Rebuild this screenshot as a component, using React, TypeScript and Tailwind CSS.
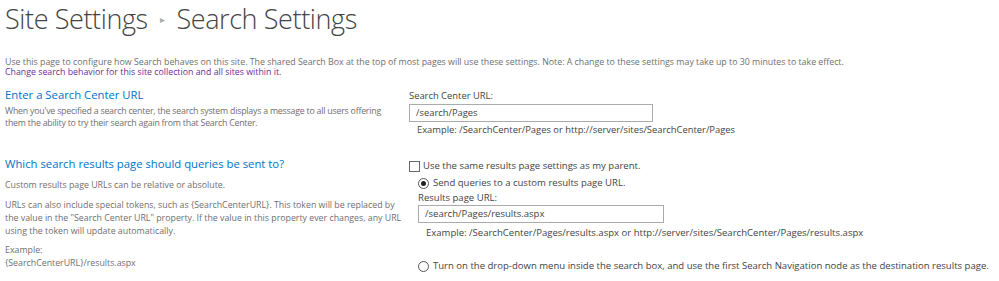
import React from "react";

const font = { fontFamily: '"Open Sans", "Liberation Sans", sans-serif' };

export default function App() {
  return (
    <div className="w-[999px] h-[281px] bg-white overflow-hidden text-[#444]" style={font}>
      <div className="pl-[5px]">
        <h1 className="flex items-center h-[36px] mt-[1px] text-[27px] font-light leading-[36px] text-[#444] tracking-[-0.4px]">
          <span>Site Settings</span>
          <span className="mx-[12px] text-[10px] text-[#aaa]">▸</span>
          <span>Search Settings</span>
        </h1>
        <div className="mt-[20px] text-[8.8px] leading-[10px] text-[#6f6f6f]">
          Use this page to configure how Search behaves on this site. The shared Search Box at the top of most pages will use these settings. Note: A change to these settings may take up to 30 minutes to take effect.
        </div>
        <div className="text-[8.8px] leading-[10px] text-[#6e2c9a]">
          Change search behavior for this site collection and all sites within it.
        </div>

        <div className="flex mt-[10px]">
          <div className="w-[404px] shrink-0">
            <h2 className="text-[11.3px] leading-[16px] text-[#0072c6]">Enter a Search Center URL</h2>
            <p className="mt-[2px] w-[397px] text-[8.8px] leading-[12px] tracking-[-0.22px] text-[#6f6f6f]">
              When you've specified a search center, the search system displays a message to all users offering them the ability to try their search again from that Search Center.
            </p>
          </div>
          <div className="text-[9.4px] leading-[12px] text-[#444]">
            <div className="mt-[3px]">Search Center URL:</div>
            <div className="mt-[2px] w-[244px] h-[18px] border border-[#ababab] px-[6px] flex items-center">/search/Pages</div>
            <div className="mt-[2px] pl-[8px]">Example: /SearchCenter/Pages or http://server/sites/SearchCenter/Pages</div>
          </div>
        </div>

        <div className="flex mt-[20px]">
          <div className="w-[404px] shrink-0">
            <h2 className="text-[11.3px] leading-[16px] text-[#0072c6]">Which search results page should queries be sent to?</h2>
            <p className="mt-[7px] text-[8.8px] leading-[13px] text-[#6f6f6f]">Custom results page URLs can be relative or absolute.</p>
            <p className="mt-[7px] w-[397px] text-[8.8px] leading-[13px] text-[#6f6f6f]">
              URLs can also include special tokens, such as {"{SearchCenterURL}"}. This token will be replaced by the value in the "Search Center URL" property. If the value in this property ever changes, any URL using the token will update automatically.
            </p>
            <p className="mt-[6px] text-[8.8px] leading-[13px] text-[#6f6f6f]">
              Example:
              <br />
              {"{SearchCenterURL}"}/results.aspx
            </p>
          </div>
          <div className="text-[9.55px] leading-[12px] text-[#444]">
            <div className="flex items-center mt-[4px]">
              <span className="w-[11px] h-[11px] border border-[#666] bg-white mr-[3px]" />
              <span>Use the same results page settings as my parent.</span>
            </div>
            <div className="pl-[9px] mt-[5px]">
              <div className="flex items-center">
                <span className="w-[11px] h-[11px] rounded-full border border-[#555] flex items-center justify-center mr-[4px]">
                  <span className="w-[5px] h-[5px] rounded-full bg-[#222]" />
                </span>
                <span>Send queries to a custom results page URL.</span>
              </div>
              <div className="mt-[3px]">Results page URL:</div>
              <div className="mt-[1px] w-[246px] h-[18px] border border-[#ababab] px-[6px] flex items-center">/search/Pages/results.aspx</div>
              <div className="mt-[4px] pl-[8px]">Example: /SearchCenter/Pages/results.aspx or http://server/sites/SearchCenter/Pages/results.aspx</div>
              <div className="flex items-center mt-[21px]">
                <span className="w-[11px] h-[11px] rounded-full border border-[#555] mr-[4px]" />
                <span>Turn on the drop-down menu inside the search box, and use the first Search Navigation node as the destination results page.</span>
              </div>
            </div>
          </div>
        </div>
      </div>
    </div>
  );
}
